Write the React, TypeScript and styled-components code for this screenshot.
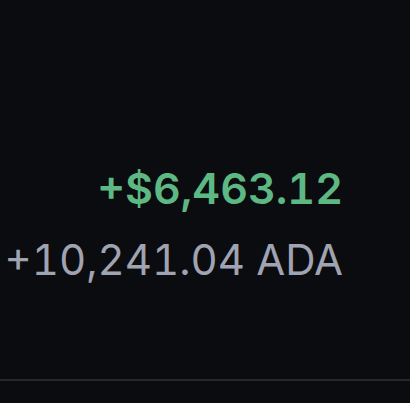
import styled, { createGlobalStyle } from "styled-components";

const GlobalStyle = createGlobalStyle`
  html, body {
    margin: 0;
    padding: 0;
    background: #0b0c0f;
  }
`;

const Screen = styled.div`
  width: 410px;
  height: 403px;
  background: #0b0c0f;
  display: flex;
  flex-direction: column;
  font-family: Inter, "Liberation Sans", sans-serif;
  overflow: hidden;
`;

const Amounts = styled.div`
  display: flex;
  flex-direction: column;
  align-items: flex-end;
  padding: 163px 67px 0 0;
  gap: 20px;
`;

const Amount = styled.div<{ $variant: "fiat" | "token" }>`
  line-height: 1.2;
  white-space: nowrap;
  font-variant-numeric: tabular-nums;
  font-size: ${({ $variant }) => ($variant === "fiat" ? "43px" : "42px")};
  font-weight: ${({ $variant }) => ($variant === "fiat" ? 600 : 400)};
  color: ${({ $variant }) => ($variant === "fiat" ? "#5db883" : "#a0a3b1")};
`;

const Divider = styled.div`
  margin-top: auto;
  margin-bottom: 22px;
  height: 2px;
  background: #26272b;
`;

export default function App() {
  return (
    <Screen>
      <GlobalStyle />
      <Amounts>
        <Amount $variant="fiat">+$6,463.12</Amount>
        <Amount $variant="token">+10,241.04 ADA</Amount>
      </Amounts>
      <Divider />
    </Screen>
  );
}
